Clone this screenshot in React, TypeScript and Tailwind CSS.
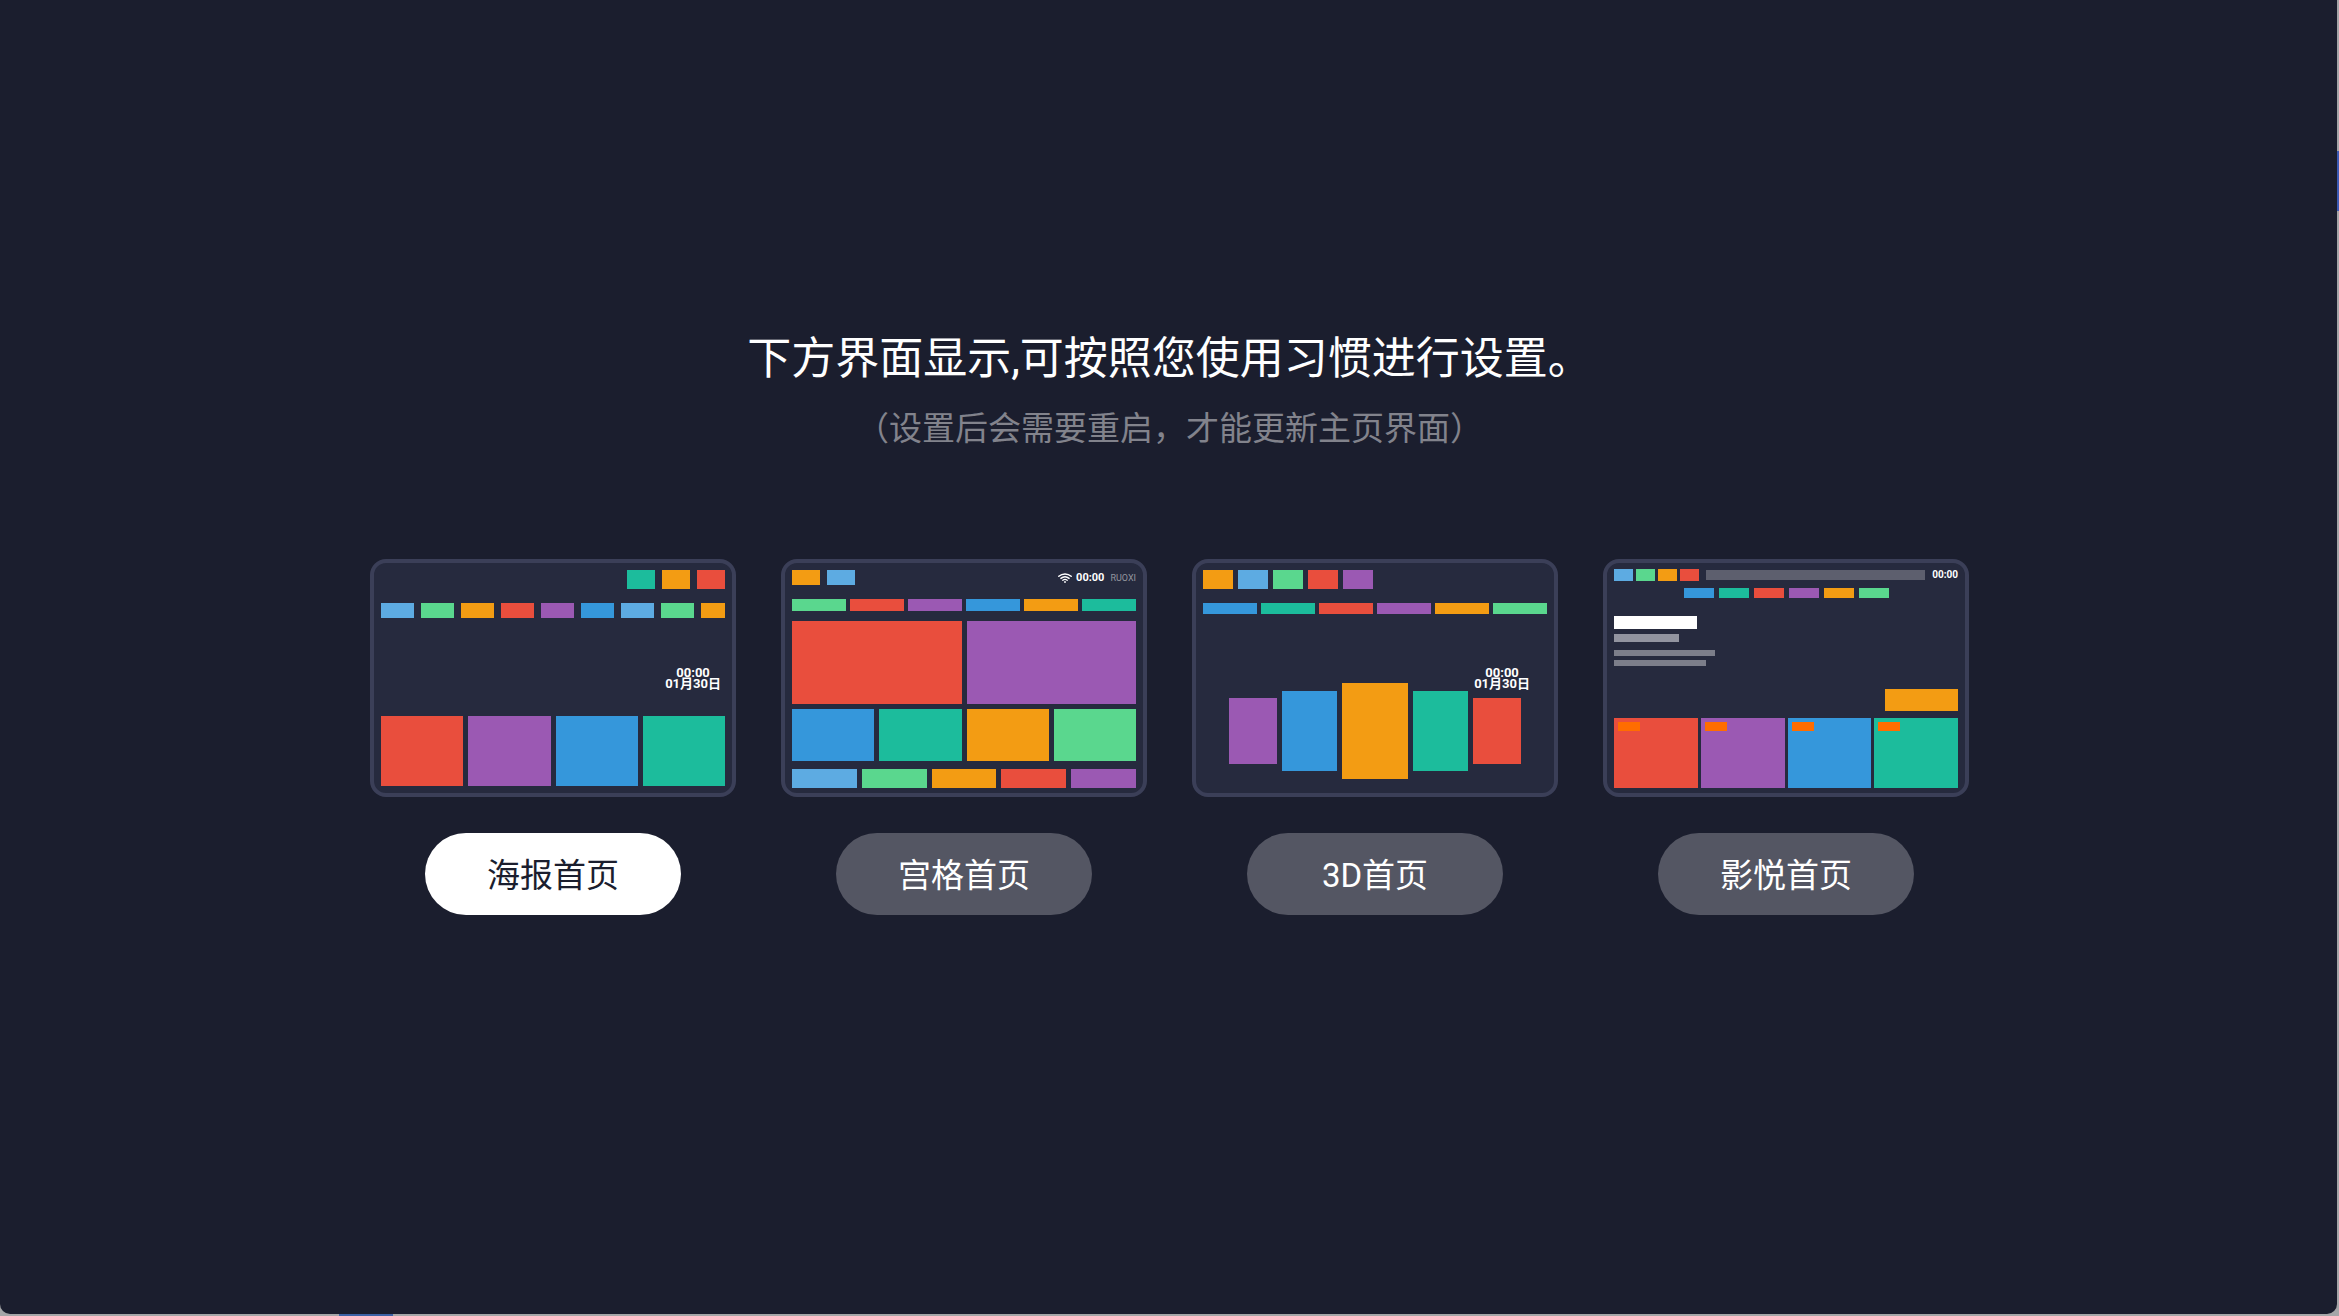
import { useState } from 'react'
import type { ReactNode } from 'react'

const red = 'bg-[#e94e3d]'
const purple = 'bg-[#9b59b3]'
const blue = 'bg-[#3597db]'
const teal = 'bg-[#1cbc9c]'
const orange = 'bg-[#f39c13]'
const green = 'bg-[#5ad78e]'
const sky = 'bg-[#5dabe2]'

function Tiles({ colors, className, tile }: { colors: string[]; className: string; tile: string }) {
  return (
    <div className={`flex shrink-0 ${className}`}>
      {colors.map((color, i) => (
        <div key={i} className={`${tile} ${color}`} />
      ))}
    </div>
  )
}

function Clock({ className }: { className: string }) {
  return (
    <div className={`absolute text-center text-[13px] leading-[11px] font-bold text-white ${className}`}>
      <div>00:00</div>
      <div>01月30日</div>
    </div>
  )
}

function WifiIcon() {
  return (
    <svg viewBox="0 0 14 10" className="h-[10px] w-[14px]" fill="none" stroke="#fff" strokeLinecap="round">
      <path d="M.8 3.3C4.4.1 9.6.1 13.2 3.3" strokeWidth="1.5" />
      <path d="M2.9 5.4c2.4-2 5.8-2 8.2 0" strokeWidth="1.4" />
      <path d="M4.8 7.3c1.3-1 3.1-1 4.4 0" strokeWidth="1.3" />
      <circle cx="7" cy="9" r=".9" fill="#fff" stroke="none" />
    </svg>
  )
}

function PosterPreview() {
  return (
    <>
      <Tiles colors={[teal, orange, red]} className="h-[19px] justify-end gap-[7px]" tile="w-7" />
      <Tiles
        colors={[sky, green, orange, red, purple, blue, sky, green]}
        className="mt-[14px] h-[15px] gap-[7px] after:flex-1 after:bg-[#f39c13]"
        tile="w-[33px]"
      />
      <Clock className="right-[11px] bottom-[104px]" />
      <Tiles colors={[red, purple, blue, teal]} className="mt-auto h-[70px] gap-[5px]" tile="flex-1" />
    </>
  )
}

function GridPreview() {
  return (
    <>
      <div className="flex h-[15px] items-start justify-between">
        <Tiles colors={[orange, sky]} className="h-[15px] gap-[7px]" tile="w-7" />
        <div className="flex h-4 items-center leading-4">
          <WifiIcon />
          <span className="ml-1 text-[11px] font-bold text-white">00:00</span>
          <span className="ml-1.5 text-[9px] text-[#94969e]">RUOXI</span>
        </div>
      </div>
      <Tiles colors={[green, red, purple, blue, orange, teal]} className="mt-[14px] h-3 gap-[4px]" tile="flex-1" />
      <Tiles colors={[red, purple]} className="mt-[10px] h-[83px] gap-[5px]" tile="flex-1" />
      <Tiles colors={[blue, teal, orange, green]} className="mt-[5px] h-[52px] gap-[5px]" tile="flex-1" />
      <Tiles colors={[sky, green, orange, red, purple]} className="mt-2 h-[19px] gap-[5px]" tile="flex-1" />
    </>
  )
}

function CarouselPreview() {
  return (
    <>
      <Tiles colors={[orange, sky, green, red, purple]} className="h-[19px] gap-[5px]" tile="w-[30px]" />
      <Tiles colors={[blue, teal, red, purple, orange, green]} className="mt-[14px] h-[11px] gap-[4px]" tile="flex-1" />
      <Clock className="right-6 bottom-[104px]" />
      <div className="mt-auto mb-[7px] flex items-center justify-center gap-[5px]">
        <div className={`h-[66px] w-12 ${purple}`} />
        <div className={`h-[80px] w-[55px] ${blue}`} />
        <div className={`h-[96px] w-[66px] ${orange}`} />
        <div className={`h-[80px] w-[55px] ${teal}`} />
        <div className={`h-[66px] w-12 ${red}`} />
      </div>
    </>
  )
}

function CinemaPreview() {
  return (
    <>
      <div className="-mt-px flex h-3 items-center">
        <Tiles colors={[sky, green, orange, red]} className="h-3 gap-[3px]" tile="w-[19px]" />
        <div className="mx-[7px] h-[10px] flex-1 bg-[#5d5f6e]" />
        <span className="text-[10px] leading-3 font-bold text-white">00:00</span>
      </div>
      <Tiles
        colors={[blue, teal, red, purple, orange, green]}
        className="mt-[7px] h-[10px] justify-center gap-[5px]"
        tile="w-[30px]"
      />
      <div className="mt-[18px] h-[13px] w-[83px] bg-white" />
      <div className="mt-[5px] h-2 w-[65px] bg-[#9294a0]" />
      <div className="mt-2 h-1.5 w-[101px] bg-[#7c7e8a]" />
      <div className="mt-1 h-1.5 w-[92px] bg-[#7c7e8a]" />
      <div className={`mt-auto h-[22px] w-[73px] self-end ${orange}`} />
      <div className="mt-[7px] -mb-[2px] flex h-[70px] gap-[3px]">
        {[red, purple, blue, teal].map((color) => (
          <div key={color} className={`flex-1 p-1 ${color}`}>
            <div className="h-[9px] w-[22px] bg-[#ff6d00]" />
          </div>
        ))}
      </div>
    </>
  )
}

const layouts: { name: string; preview: ReactNode }[] = [
  { name: '海报首页', preview: <PosterPreview /> },
  { name: '宫格首页', preview: <GridPreview /> },
  { name: '3D首页', preview: <CarouselPreview /> },
  { name: '影悦首页', preview: <CinemaPreview /> },
]

export default function App() {
  const [selected, setSelected] = useState('海报首页')

  return (
    <div className="relative flex min-h-screen bg-[#a5a6a8] pr-[2px] pb-[2px] font-[Roboto,'Noto_Sans_CJK_SC',sans-serif]">
      {/* Desktop showing past the window edges */}
      <div className="absolute top-[151px] right-0 h-[60px] w-[2px] bg-[#3d5bb5]" />
      <div className="absolute bottom-0 left-[339px] h-[2px] w-[54px] bg-[#3d62a5]" />

      <main className="flex flex-1 flex-col items-center rounded-b-[10px] bg-[#1b1e2e] pt-[327px] pl-[2px]">
        <h1 className="text-[44px] leading-[64px] text-white">下方界面显示,可按照您使用习惯进行设置。</h1>
        <p className="mt-[14px] text-[33px] leading-[48px] text-[#82838c]">（设置后会需要重启，才能更新主页界面）</p>

        <div className="mt-[106px] flex gap-[45px]">
          {layouts.map(({ name, preview }) => (
            <section key={name} className="flex w-[366px] flex-col items-center">
              <div className="relative flex h-[238px] w-full flex-col rounded-2xl border-4 border-[#3b3f58] bg-[#262a3e] p-[7px]">
                {preview}
              </div>
              <button
                type="button"
                aria-pressed={selected === name}
                onClick={() => setSelected(name)}
                className={`mt-9 h-[82px] w-64 rounded-full pt-[3px] text-[33px] leading-[48px] ${
                  selected === name ? 'bg-white text-[#1b1e2e]' : 'bg-[#545663] text-white'
                }`}
              >
                {name}
              </button>
            </section>
          ))}
        </div>
      </main>
    </div>
  )
}
